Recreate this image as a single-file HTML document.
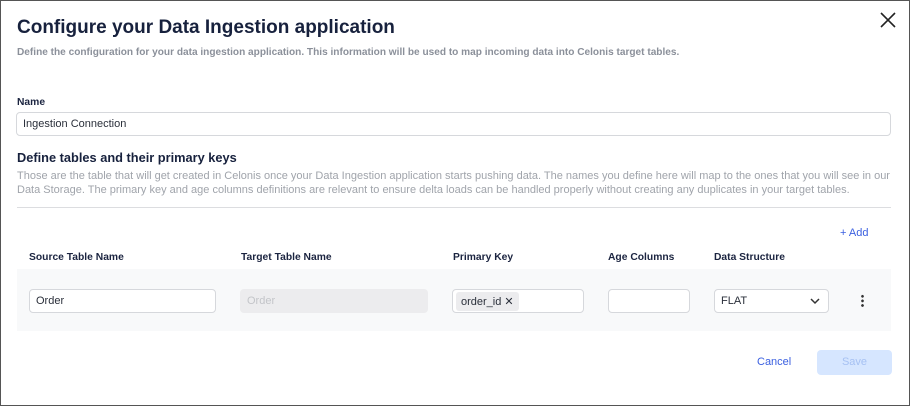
<!DOCTYPE html>
<html><head><style>
*{box-sizing:border-box;margin:0;padding:0}
body{width:910px;height:406px;background:#fff;font-family:"Liberation Sans",sans-serif;position:relative;overflow:hidden;}
.frame{position:absolute;left:0;top:0;width:910px;height:406px;border:1px solid #555}
.w{position:absolute;left:0;top:1px;width:910px;height:405px}
.a{position:absolute;white-space:nowrap}
h1{position:absolute;left:17px;top:16px;font-size:19px;font-weight:bold;color:#17213d}
.sub{left:17px;top:46px;font-size:10.1px;font-weight:bold;color:#8b909a}
.lab{font-size:10.3px;font-weight:bold;color:#1b2440}
.inp{position:absolute;border:1px solid #d6d8dc;border-radius:4px;background:#fff;font-size:11px;color:#2a2f3a;padding-left:6px;display:flex;align-items:center}
.p{left:17px;font-size:11px;color:#a0a4ab;line-height:14px}
</style></head><body>
<div class="frame"></div>
<div class="w">
<h1>Configure your Data Ingestion application</h1>
<div class="a sub">Define the configuration for your data ingestion application. This information will be used to map incoming data into Celonis target tables.</div>
<svg class="a" style="left:879px;top:10px" width="18" height="18"><path d="M2 2L16 16M16 2L2 16" stroke="#222" stroke-width="1.6"/></svg>
<div class="a lab" style="left:17px;top:96px">Name</div>
<div class="inp" style="left:16px;top:111px;width:875px;height:24px">Ingestion Connection</div>
<div class="a" style="left:17px;top:149px;font-size:12.8px;font-weight:bold;color:#17213d">Define tables and their primary keys</div>
<div class="a p" style="top:168px">Those are the table that will get created in Celonis once your Data Ingestion application starts pushing data. The names you define here will map to the ones that you will see in our<br>Data Storage. The primary key and age columns definitions are relevant to ensure delta loads can be handled properly without creating any duplicates in your target tables.</div>
<div class="a" style="left:17px;top:206px;width:874px;height:1px;background:#dcdde0"></div>
<div class="a" style="left:840px;top:226px;font-size:11px;color:#3a5fe0">+ Add</div>
<div class="a lab" style="left:29px;top:251px">Source Table Name</div>
<div class="a lab" style="left:241px;top:251px">Target Table Name</div>
<div class="a lab" style="left:453px;top:251px">Primary Key</div>
<div class="a lab" style="left:608px;top:251px">Age Columns</div>
<div class="a lab" style="left:714px;top:251px">Data Structure</div>
<div class="a" style="left:17px;top:268px;width:874px;height:62px;background:#f8f9fa"></div>
<div class="inp" style="left:29px;top:288px;width:187px;height:24px">Order</div>
<div class="inp" style="left:240px;top:288px;width:188px;height:24px;background:#ececee;border-color:#ececee;color:#c3c5c9">Order</div>
<div class="inp" style="left:452px;top:288px;width:132px;height:24px;padding-left:3px"><span style="background:#ececee;border-radius:3px;padding:3px 5px;color:#2a2f3a">order_id ✕</span></div>
<div class="inp" style="left:608px;top:288px;width:82px;height:24px"></div>
<div class="inp" style="left:714px;top:288px;width:115px;height:24px">FLAT
<svg style="position:absolute;right:8px;top:8px" width="10" height="7"><path d="M1 1L5 5L9 1" stroke="#333" stroke-width="1.5" fill="none"/></svg></div>
<div class="a" style="left:861px;top:293px;width:3px;height:14px;background:radial-gradient(circle,#333 1.2px,transparent 1.5px) 0 0/3px 4.6px"></div>
<div class="a" style="left:757px;top:355px;font-size:11px;color:#3a5fe0">Cancel</div>
<div class="a" style="left:817px;top:349px;width:75px;height:25px;background:#d6e6ff;border-radius:4px;color:#a6c1f3;font-size:11px;text-align:center;line-height:25px">Save</div>
</div>
</body></html>
